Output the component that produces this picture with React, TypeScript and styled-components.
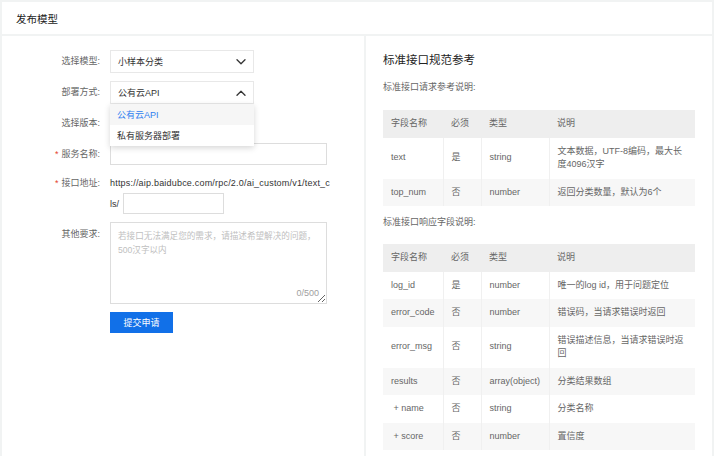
import React from "react";
import styled, { createGlobalStyle } from "styled-components";

const FONT = `"Liberation Sans", "Noto Sans CJK SC", sans-serif`;
const FS = "9px";

const Global = createGlobalStyle`
  html, body { margin: 0; padding: 0; background: #f1f3f3; }
  body { font-family: ${FONT}; }
  * { box-sizing: border-box; }
`;

const Page = styled.div`
  width: 714px;
  height: 456px;
  padding: 2px 2px 0 2px;
  display: flex;
  flex-direction: column;
  gap: 2px;
  overflow: hidden;
  background: #f1f3f3;
`;

const Header = styled.div`
  height: 32px;
  background: #fff;
  display: flex;
  align-items: center;
  padding-left: 14px;
  font-size: 10.5px;
  color: #222;
  flex-shrink: 0;
`;

const Body = styled.div`
  flex: 1;
  display: grid;
  grid-template-columns: 362px 1fr;
  gap: 2px;
  min-height: 0;
`;

const LeftPanel = styled.div`
  background: #fff;
  padding-top: 14px;
  display: flex;
  flex-direction: column;
  gap: 8px;
`;

const Row = styled.div<{ $top?: boolean }>`
  display: flex;
  align-items: flex-start;
  gap: 10px;
  position: relative;
  z-index: ${(p) => (p.$top ? 5 : "auto")};
`;

const Label = styled.div<{ $lh?: number }>`
  width: 98px;
  text-align: right;
  font-size: ${FS};
  line-height: ${(p) => p.$lh ?? 22}px;
  color: #666;
  flex-shrink: 0;
`;

const Star = styled.span`
  color: #e5412f;
  margin-right: 3px;
`;

const SelectWrap = styled.div`
  position: relative;
  width: 144px;
`;

const SelectBox = styled.div`
  height: 23px;
  border: 1px solid #e8e8e8;
  display: flex;
  align-items: center;
  justify-content: space-between;
  padding: 0 7px 0 7px;
  font-size: ${FS};
  color: #333;
  background: #fff;
`;

const Menu = styled.div`
  position: absolute;
  top: 100%;
  left: 0;
  width: 100%;
  background: #fff;
  box-shadow: 0 2px 6px rgba(0, 0, 0, 0.16);
  z-index: 5;
`;

const MenuItem = styled.div<{ $active?: boolean }>`
  height: 21px;
  display: flex;
  align-items: center;
  padding-left: 7px;
  font-size: ${FS};
  color: ${(p) => (p.$active ? "#2f7ff0" : "#333")};
  background: ${(p) => (p.$active ? "#f6f6f6" : "#fff")};
`;

const TextInput = styled.input<{ $w: number; $h?: number }>`
  width: ${(p) => p.$w}px;
  height: ${(p) => p.$h ?? 22}px;
  border: 1px solid #dddddd;
  outline: none;
  padding: 0 6px;
  font-size: ${FS};
  margin: 0;
  background: #fff;
`;

const AddressCol = styled.div`
  display: flex;
  flex-direction: column;
  font-size: ${FS};
  color: #333;
`;

const UrlLine = styled.div`
  height: 20px;
  line-height: 20px;
  white-space: nowrap;
  letter-spacing: 0.2px;
`;

const UrlTail = styled.div`
  display: flex;
  align-items: center;
  gap: 4px;
`;

const AreaWrap = styled.div`
  position: relative;
  width: 217px;
  height: 82px;
`;

const Area = styled.textarea`
  width: 100%;
  height: 100%;
  border: 1px solid #dddddd;
  outline: none;
  resize: both;
  overflow: hidden;
  padding: 6px 7px;
  font-family: ${FONT};
  font-size: 8.6px;
  line-height: 14px;
  color: #333;
  display: block;
  &::placeholder { color: #c0c0c0; }
`;

const Counter = styled.span`
  position: absolute;
  right: 8px;
  bottom: 6px;
  font-size: ${FS};
  color: #a0a0a0;
`;

const SubmitButton = styled.button`
  width: 63px;
  height: 21px;
  border: none;
  background: #1170e8;
  color: #fff;
  font-family: ${FONT};
  font-size: ${FS};
  padding: 0;
  cursor: pointer;
`;

const RightPanel = styled.div`
  background: #fff;
  padding: 16px 17px 0 17px;
  display: flex;
  flex-direction: column;
`;

const Title = styled.div`
  font-size: 11.5px;
  line-height: 16px;
  color: #222;
`;

const SubTitle = styled.div<{ $mt: number }>`
  margin-top: ${(p) => p.$mt}px;
  font-size: ${FS};
  line-height: 14px;
  color: #666;
`;

const Table = styled.table<{ $mt: number }>`
  margin-top: ${(p) => p.$mt}px;
  width: 312px;
  border-collapse: collapse;
  table-layout: fixed;
  font-size: ${FS};
  color: #666;
`;

const Th = styled.th<{ $w: number }>`
  width: ${(p) => p.$w}px;
  background: #eeeeee;
  text-align: left;
  font-weight: normal;
  padding: 7px 8px;
  line-height: 13.5px;
`;

const Tr = styled.tr<{ $alt?: boolean }>`
  background: ${(p) => (p.$alt ? "#f7f7f7" : "#fff")};
`;

const Td = styled.td`
  padding: 7px 8px;
  line-height: 13.5px;
  vertical-align: middle;
  white-space: pre-line;
  border-left: 1px solid #f0f0f0;
  &:first-child { border-left: none; }
`;

const Chevron = ({ up }: { up?: boolean }) => (
  <svg width="10" height="6" viewBox="0 0 10 6" fill="none">
    <path
      d={up ? "M1 5.2 L5 1.2 L9 5.2" : "M1 0.8 L5 4.8 L9 0.8"}
      stroke="#333"
      strokeWidth="1.3"
      strokeLinecap="round"
      strokeLinejoin="round"
    />
  </svg>
);

type R = [string, string, string, string];

const reqRows: R[] = [
  ["text", "是", "string", "文本数据，UTF-8编码，最大长\n度4096汉字"],
  ["top_num", "否", "number", "返回分类数量，默认为6个"],
];

const respRows: R[] = [
  ["log_id", "是", "number", "唯一的log id，用于问题定位"],
  ["error_code", "否", "number", "错误码，当请求错误时返回"],
  ["error_msg", "否", "string", "错误描述信息，当请求错误时返\n回"],
  ["results", "否", "array(object)", "分类结果数组"],
  ["\u00a0+ name", "否", "string", "分类名称"],
  ["\u00a0+ score", "否", "number", "置信度"],
];

const SpecTable = ({ rows, mt }: { rows: R[]; mt: number }) => (
  <Table $mt={mt}>
    <thead>
      <tr>
        <Th $w={60}>字段名称</Th>
        <Th $w={38}>必须</Th>
        <Th $w={68}>类型</Th>
        <Th $w={146}>说明</Th>
      </tr>
    </thead>
    <tbody>
      {rows.map((r, i) => (
        <Tr key={i} $alt={i % 2 === 1}>
          {r.map((c, j) => (
            <Td key={j}>{c}</Td>
          ))}
        </Tr>
      ))}
    </tbody>
  </Table>
);

export default function App() {
  return (
    <>
      <Global />
      <Page>
        <Header>发布模型</Header>
        <Body>
          <LeftPanel>
            <Row>
              <Label>选择模型:</Label>
              <SelectWrap>
                <SelectBox>
                  <span>小样本分类</span>
                  <Chevron />
                </SelectBox>
              </SelectWrap>
            </Row>
            <Row $top>
              <Label>部署方式:</Label>
              <SelectWrap>
                <SelectBox>
                  <span>公有云API</span>
                  <Chevron up />
                </SelectBox>
                <Menu>
                  <MenuItem $active>公有云API</MenuItem>
                  <MenuItem>私有服务器部署</MenuItem>
                </Menu>
              </SelectWrap>
            </Row>
            <Row>
              <Label>选择版本:</Label>
              <SelectWrap>
                <SelectBox>
                  <span />
                  <Chevron />
                </SelectBox>
              </SelectWrap>
            </Row>
            <Row>
              <Label>
                <Star>*</Star>服务名称:
              </Label>
              <TextInput $w={217} />
            </Row>
            <Row>
              <Label $lh={20}>
                <Star>*</Star>接口地址:
              </Label>
              <AddressCol>
                <UrlLine>https://aip.baidubce.com/rpc/2.0/ai_custom/v1/text_c</UrlLine>
                <UrlTail>
                  <span>ls/</span>
                  <TextInput $w={101} $h={21} />
                </UrlTail>
              </AddressCol>
            </Row>
            <Row>
              <Label $lh={24}>其他要求:</Label>
              <AreaWrap>
                <Area placeholder={"若接口无法满足您的需求，请描述希望解决的问题，\n500汉字以内"} />
                <Counter>0/500</Counter>
              </AreaWrap>
            </Row>
            <Row>
              <Label />
              <SubmitButton>提交申请</SubmitButton>
            </Row>
          </LeftPanel>
          <RightPanel>
            <Title>标准接口规范参考</Title>
            <SubTitle $mt={12}>标准接口请求参考说明:</SubTitle>
            <SpecTable rows={reqRows} mt={16} />
            <SubTitle $mt={9}>标准接口响应字段说明:</SubTitle>
            <SpecTable rows={respRows} mt={15} />
          </RightPanel>
        </Body>
      </Page>
    </>
  );
}
